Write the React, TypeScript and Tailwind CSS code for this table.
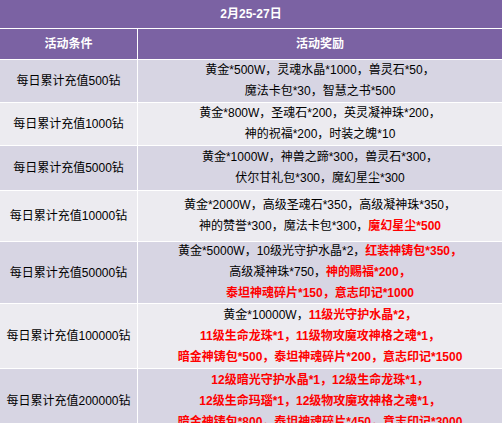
type Seg = { t: string; red?: boolean };

const R = (t: string): Seg => ({ t, red: true });
const B = (t: string): Seg => ({ t });

const rows: { cond: string; h: string; bg: string; lines: Seg[][] }[] = [
  {
    cond: "每日累计充值500钻",
    h: "h-[42px]",
    bg: "bg-[#d7d5e3]",
    lines: [
      [B("黄金*500W，灵魂水晶*1000，兽灵石*50，")],
      [B("魔法卡包*30，智慧之书*500")],
    ],
  },
  {
    cond: "每日累计充值1000钻",
    h: "h-[42px]",
    bg: "bg-[#ecebf0]",
    lines: [
      [B("黄金*800W，圣魂石*200，英灵凝神珠*200，")],
      [B("神的祝福*200，时装之魄*10")],
    ],
  },
  {
    cond: "每日累计充值5000钻",
    h: "h-[44px]",
    bg: "bg-[#d7d5e3]",
    lines: [
      [B("黄金*1000W，神兽之蹄*300，兽灵石*300，")],
      [B("伏尔甘礼包*300，魔幻星尘*300")],
    ],
  },
  {
    cond: "每日累计充值10000钻",
    h: "h-[50px]",
    bg: "bg-[#ecebf0]",
    lines: [
      [B("黄金*2000W，高级圣魂石*350，高级凝神珠*350，")],
      [B("神的赞誉*300，魔法卡包*300，"), R("魔幻星尘*500")],
    ],
  },
  {
    cond: "每日累计充值50000钻",
    h: "h-[61px]",
    bg: "bg-[#d7d5e3]",
    lines: [
      [B("黄金*5000W，10级光守护水晶*2，"), R("红装神铸包*350，")],
      [B("高级凝神珠*750，"), R("神的赐福*200，")],
      [R("泰坦神魂碎片*150，意志印记*1000")],
    ],
  },
  {
    cond: "每日累计充值100000钻",
    h: "h-[64px]",
    bg: "bg-[#ecebf0]",
    lines: [
      [B("黄金*10000W，"), R("11级光守护水晶*2，")],
      [R("11级生命龙珠*1，11级物攻魔攻神格之魂*1，")],
      [R("暗金神铸包*500，泰坦神魂碎片*200，意志印记*1500")],
    ],
  },
  {
    cond: "每日累计充值200000钻",
    h: "h-[64px]",
    bg: "bg-[#d7d5e3]",
    lines: [
      [R("12级暗光守护水晶*1，12级生命龙珠*1，")],
      [R("12级生命玛瑙*1，12级物攻魔攻神格之魂*1，")],
      [R("暗金神铸包*800，泰坦神魂碎片*450，意志印记*3000")],
    ],
  },
];

export default function App() {
  return (
    <div className="w-[502px] h-[423px] overflow-hidden bg-white font-['Liberation_Sans','Noto_Sans_CJK_SC',sans-serif] text-[12px] text-black">
      <div className="flex h-[28px] items-center justify-center bg-[#7b62a3] font-bold text-white">
        2月25-27日
      </div>
      <div className="mt-px grid grid-cols-[137px_1fr] gap-px bg-white">
        <div className="flex h-[30px] items-center justify-center bg-[#7b62a3] font-bold text-white">
          活动条件
        </div>
        <div className="flex h-[30px] items-center justify-center bg-[#7b62a3] font-bold text-white">
          活动奖励
        </div>
        {rows.map((r) => (
          <div key={r.cond} className="contents">
            <div className={`flex items-center justify-center ${r.h} ${r.bg}`}>
              {r.cond}
            </div>
            <div className={`flex flex-col items-center justify-center ${r.h} ${r.bg}`}>
              {r.lines.map((line, i) => (
                <div key={i} className="whitespace-nowrap leading-[21px]">
                  {line.map((s, j) => (
                    <span key={j} className={s.red ? "font-bold text-[#f00]" : ""}>
                      {s.t}
                    </span>
                  ))}
                </div>
              ))}
            </div>
          </div>
        ))}
      </div>
    </div>
  );
}
